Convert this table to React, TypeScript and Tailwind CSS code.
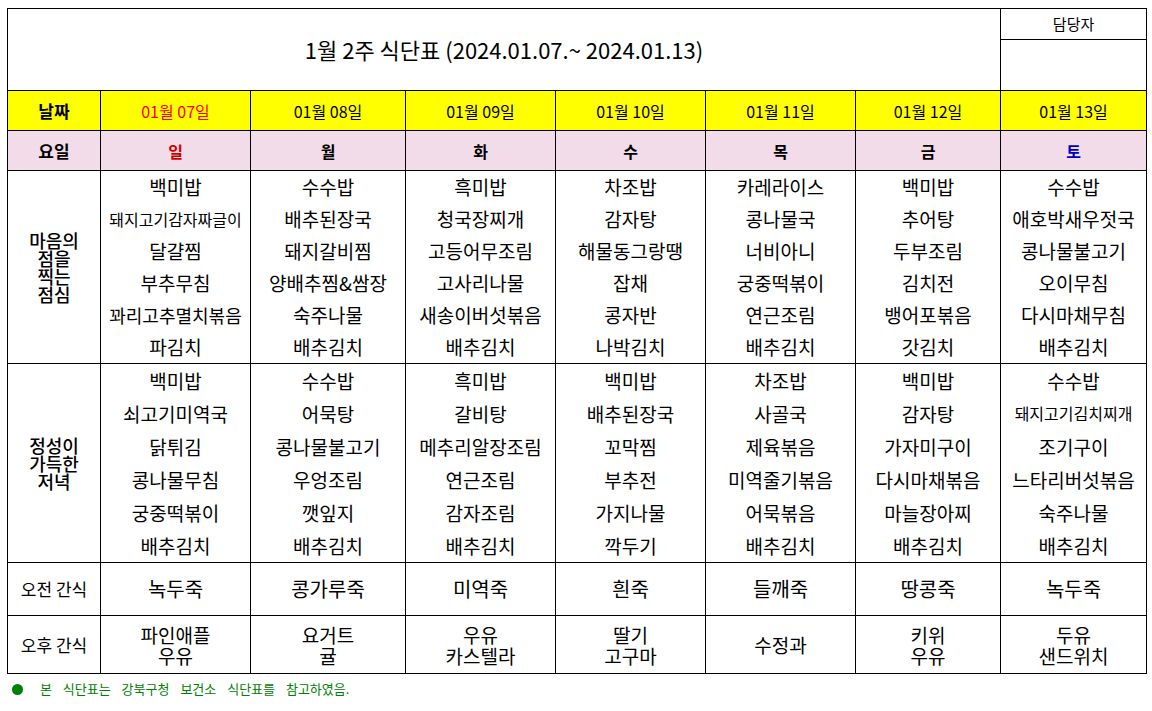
import React from "react";

const dates = ["01월 07일", "01월 08일", "01월 09일", "01월 10일", "01월 11일", "01월 12일", "01월 13일"];
const days = ["일", "월", "화", "수", "목", "금", "토"];

const lunch: string[][] = [
  ["백미밥", "돼지고기감자짜글이", "달걀찜", "부추무침", "꽈리고추멸치볶음", "파김치"],
  ["수수밥", "배추된장국", "돼지갈비찜", "양배추찜&쌈장", "숙주나물", "배추김치"],
  ["흑미밥", "청국장찌개", "고등어무조림", "고사리나물", "새송이버섯볶음", "배추김치"],
  ["차조밥", "감자탕", "해물동그랑땡", "잡채", "콩자반", "나박김치"],
  ["카레라이스", "콩나물국", "너비아니", "궁중떡볶이", "연근조림", "배추김치"],
  ["백미밥", "추어탕", "두부조림", "김치전", "뱅어포볶음", "갓김치"],
  ["수수밥", "애호박새우젓국", "콩나물불고기", "오이무침", "다시마채무침", "배추김치"],
];

const dinner: string[][] = [
  ["백미밥", "쇠고기미역국", "닭튀김", "콩나물무침", "궁중떡볶이", "배추김치"],
  ["수수밥", "어묵탕", "콩나물불고기", "우엉조림", "깻잎지", "배추김치"],
  ["흑미밥", "갈비탕", "메추리알장조림", "연근조림", "감자조림", "배추김치"],
  ["백미밥", "배추된장국", "꼬막찜", "부추전", "가지나물", "깍두기"],
  ["차조밥", "사골국", "제육볶음", "미역줄기볶음", "어묵볶음", "배추김치"],
  ["백미밥", "감자탕", "가자미구이", "다시마채볶음", "마늘장아찌", "배추김치"],
  ["수수밥", "돼지고기김치찌개", "조기구이", "느타리버섯볶음", "숙주나물", "배추김치"],
];

const morning = ["녹두죽", "콩가루죽", "미역죽", "흰죽", "들깨죽", "땅콩죽", "녹두죽"];
const afternoon: string[][] = [
  ["파인애플", "우유"],
  ["요거트", "귤"],
  ["우유", "카스텔라"],
  ["딸기", "고구마"],
  ["수정과"],
  ["키위", "우유"],
  ["두유", "샌드위치"],
];

function sizeFor(it: string) {
  if (it === "돼지고기감자짜글이") return "text-[16px]";
  if (it === "돼지고기김치찌개") return "text-[16px]";
  if (it.length >= 8) return "text-[18px]";
  return "text-[19px]";
}

const cell = "border border-black p-0 text-center align-middle";

function MenuCell({ items, leading }: { items: string[]; leading: string }) {
  return (
    <td className={cell}>
      <div className="flex flex-col items-center">
        {items.map((it, i) => (
          <div key={i} className={`${leading} whitespace-nowrap ${sizeFor(it)}`}>
            {it}
          </div>
        ))}
      </div>
    </td>
  );
}

export default function App() {
  return (
    <div
      className="bg-white w-[1152px] h-[711px] pl-[7px] pt-[8px] text-black"
      style={{ fontFamily: '"Noto Sans CJK KR", "Noto Sans", sans-serif' }}
    >
      <table className="border-collapse table-fixed w-[1139px]">
        <colgroup>
          <col className="w-[93px]" />
          <col className="w-[150px]" />
          <col className="w-[155px]" />
          <col className="w-[150px]" />
          <col className="w-[150px]" />
          <col className="w-[150px]" />
          <col className="w-[145px]" />
          <col className="w-[146px]" />
        </colgroup>
        <tbody>
          <tr className="h-[31px]">
            <td colSpan={7} rowSpan={2} className={`${cell} text-[22px]`}>
              1월 2주 식단표 (2024.01.07.~ 2024.01.13)
            </td>
            <td className={`${cell} text-[15px] h-[31px]`}>담당자</td>
          </tr>
          <tr className="h-[51px]">
            <td className={`${cell} h-[51px]`}></td>
          </tr>
          <tr className="h-[40px] bg-[#ffff00]">
            <td className={`${cell} text-[17px] font-bold h-[40px]`}>날짜</td>
            {dates.map((d, i) => (
              <td key={i} className={`${cell} text-[16px] ${i === 0 ? "text-[#ff0000]" : ""}`}>
                {d}
              </td>
            ))}
          </tr>
          <tr className="h-[40px] bg-[#f2dcea]">
            <td className={`${cell} text-[17px] font-bold h-[40px]`}>요일</td>
            {days.map((d, i) => (
              <td
                key={i}
                className={`${cell} text-[16px] font-bold ${
                  i === 0 ? "text-[#d00000]" : i === 6 ? "text-[#0000c0]" : ""
                }`}
              >
                {d}
              </td>
            ))}
          </tr>
          <tr className="h-[193px]">
            <td className={`${cell} text-[18px] font-medium leading-[18px] h-[193px]`}>
              마음의
              <br />
              점을
              <br />
              찍는
              <br />
              점심
            </td>
            {lunch.map((items, i) => (
              <MenuCell key={i} items={items} leading="leading-[32px]" />
            ))}
          </tr>
          <tr className="h-[199px]">
            <td className={`${cell} text-[18px] font-medium leading-[18px] h-[199px]`}>
              정성이
              <br />
              가득한
              <br />
              저녁
            </td>
            {dinner.map((items, i) => (
              <MenuCell key={i} items={items} leading="leading-[33px]" />
            ))}
          </tr>
          <tr className="h-[53px]">
            <td className={`${cell} text-[17px] h-[53px]`}>오전 간식</td>
            {morning.map((m, i) => (
              <td key={i} className={`${cell} text-[20px]`}>
                {m}
              </td>
            ))}
          </tr>
          <tr className="h-[58px]">
            <td className={`${cell} text-[17px] h-[58px]`}>오후 간식</td>
            {afternoon.map((items, i) => (
              <td key={i} className={`${cell} text-[19px] leading-[21px]`}>
                {items.map((it, j) => (
                  <div key={j}>{it}</div>
                ))}
              </td>
            ))}
          </tr>
        </tbody>
      </table>
      <div className="flex items-center h-[30px] pl-[5px] text-[#008000]">
        <span className="w-[11px] h-[11px] rounded-full bg-[#008000] inline-block" />
        <span className="ml-[17px] text-[13px] [word-spacing:8px]">
          본 식단표는 강북구청 보건소 식단표를 참고하였음.
        </span>
      </div>
    </div>
  );
}
